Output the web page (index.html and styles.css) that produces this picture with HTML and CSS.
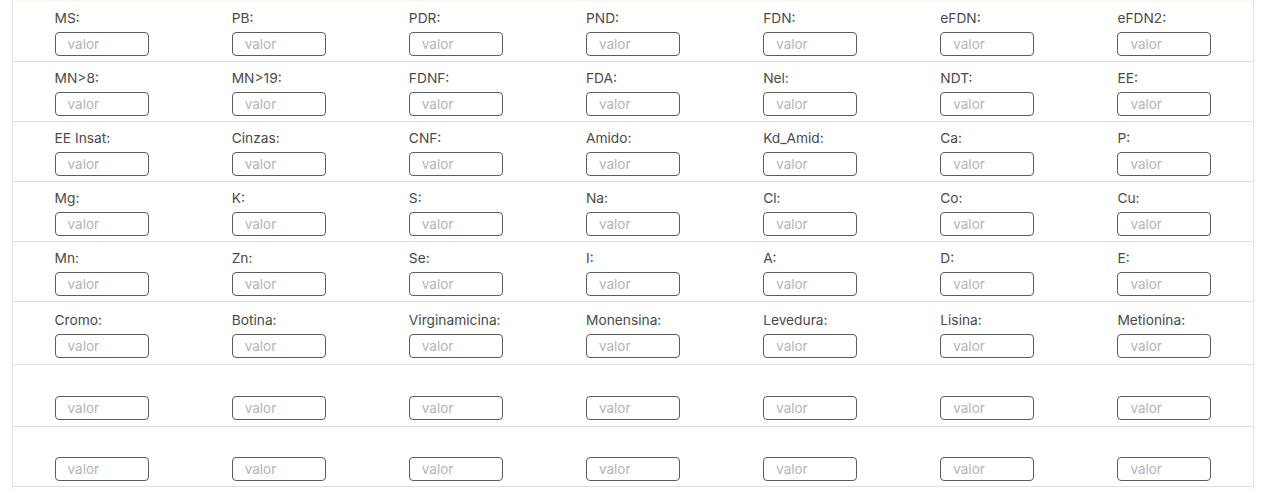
FILE: index.html
```html
<!DOCTYPE html>
<html lang="pt">
<head>
<meta charset="utf-8">
<title>Nutrientes</title>
<link rel="stylesheet" href="styles.css">
</head>
<body>
<div class="panel">
  <div class="strip"></div>
  <div class="row">
    <div class="field"><label>MS:</label><input placeholder="valor"></div>
    <div class="field"><label>PB:</label><input placeholder="valor"></div>
    <div class="field"><label>PDR:</label><input placeholder="valor"></div>
    <div class="field"><label>PND:</label><input placeholder="valor"></div>
    <div class="field"><label>FDN:</label><input placeholder="valor"></div>
    <div class="field"><label>eFDN:</label><input placeholder="valor"></div>
    <div class="field"><label>eFDN2:</label><input placeholder="valor"></div>
  </div>
  <div class="row">
    <div class="field"><label>MN&gt;8:</label><input placeholder="valor"></div>
    <div class="field"><label>MN&gt;19:</label><input placeholder="valor"></div>
    <div class="field"><label>FDNF:</label><input placeholder="valor"></div>
    <div class="field"><label>FDA:</label><input placeholder="valor"></div>
    <div class="field"><label>Nel:</label><input placeholder="valor"></div>
    <div class="field"><label>NDT:</label><input placeholder="valor"></div>
    <div class="field"><label>EE:</label><input placeholder="valor"></div>
  </div>
  <div class="row">
    <div class="field"><label>EE Insat:</label><input placeholder="valor"></div>
    <div class="field"><label>Cinzas:</label><input placeholder="valor"></div>
    <div class="field"><label>CNF:</label><input placeholder="valor"></div>
    <div class="field"><label>Amido:</label><input placeholder="valor"></div>
    <div class="field"><label>Kd_Amid:</label><input placeholder="valor"></div>
    <div class="field"><label>Ca:</label><input placeholder="valor"></div>
    <div class="field"><label>P:</label><input placeholder="valor"></div>
  </div>
  <div class="row">
    <div class="field"><label>Mg:</label><input placeholder="valor"></div>
    <div class="field"><label>K:</label><input placeholder="valor"></div>
    <div class="field"><label>S:</label><input placeholder="valor"></div>
    <div class="field"><label>Na:</label><input placeholder="valor"></div>
    <div class="field"><label>Cl:</label><input placeholder="valor"></div>
    <div class="field"><label>Co:</label><input placeholder="valor"></div>
    <div class="field"><label>Cu:</label><input placeholder="valor"></div>
  </div>
  <div class="row">
    <div class="field"><label>Mn:</label><input placeholder="valor"></div>
    <div class="field"><label>Zn:</label><input placeholder="valor"></div>
    <div class="field"><label>Se:</label><input placeholder="valor"></div>
    <div class="field"><label>I:</label><input placeholder="valor"></div>
    <div class="field"><label>A:</label><input placeholder="valor"></div>
    <div class="field"><label>D:</label><input placeholder="valor"></div>
    <div class="field"><label>E:</label><input placeholder="valor"></div>
  </div>
  <div class="row row-extra">
    <div class="field"><label>Cromo:</label><input placeholder="valor"></div>
    <div class="field"><label>Botina:</label><input placeholder="valor"></div>
    <div class="field"><label>Virginamicina:</label><input placeholder="valor"></div>
    <div class="field"><label>Monensina:</label><input placeholder="valor"></div>
    <div class="field"><label>Levedura:</label><input placeholder="valor"></div>
    <div class="field"><label>Lisina:</label><input placeholder="valor"></div>
    <div class="field"><label>Metionina:</label><input placeholder="valor"></div>
  </div>
  <div class="row row-tall">
    <div class="field"><label></label><input placeholder="valor"></div>
    <div class="field"><label></label><input placeholder="valor"></div>
    <div class="field"><label></label><input placeholder="valor"></div>
    <div class="field"><label></label><input placeholder="valor"></div>
    <div class="field"><label></label><input placeholder="valor"></div>
    <div class="field"><label></label><input placeholder="valor"></div>
    <div class="field"><label></label><input placeholder="valor"></div>
  </div>
  <div class="row">
    <div class="field"><label></label><input placeholder="valor"></div>
    <div class="field"><label></label><input placeholder="valor"></div>
    <div class="field"><label></label><input placeholder="valor"></div>
    <div class="field"><label></label><input placeholder="valor"></div>
    <div class="field"><label></label><input placeholder="valor"></div>
    <div class="field"><label></label><input placeholder="valor"></div>
    <div class="field"><label></label><input placeholder="valor"></div>
  </div>
  <div class="tail"></div>
</div>
</body>
</html>
```

FILE: styles.css
```css
html, body {
  margin: 0;
  padding: 0;
  background: #ffffff;
  font-family: Inter, "Noto Sans", "Liberation Sans", sans-serif;
}

.panel {
  margin-left: 12px;
  width: 1242px;
  box-sizing: border-box;
  border-left: 1px solid #e3e3e3;
  border-right: 1px solid #e3e3e3;
}

.strip {
  height: 2px;
  background: #f8f8ec;
}

.row {
  display: grid;
  grid-template-columns: repeat(7, 1fr);
  justify-items: center;
  padding: 7px 0 5px;
  border-bottom: 1px solid #e1e1e1;
}

.row-extra {
  padding-top: 9px;
  padding-bottom: 6px;
}

.row-tall {
  padding-top: 8px;
  padding-bottom: 6px;
}

.field {
  width: 94px;
  display: flex;
  flex-direction: column;
  gap: 5px;
}

.field label {
  display: block;
  height: 18px;
  line-height: 18px;
  font-size: 13.75px;
  font-weight: 400;
  color: #4a4a4a;
  white-space: nowrap;
}

.field input {
  box-sizing: border-box;
  width: 94px;
  height: 24px;
  margin: 0;
  padding: 0 12px;
  border: 1px solid #5c5c5c;
  border-radius: 4px;
  background: #ffffff;
  font-family: Inter, "Noto Sans", "Liberation Sans", sans-serif;
  font-size: 13.5px;
  color: #333333;
  outline: none;
}

.field input::placeholder {
  color: #b4b4b4;
}

.tail {
  height: 2px;
}
```
